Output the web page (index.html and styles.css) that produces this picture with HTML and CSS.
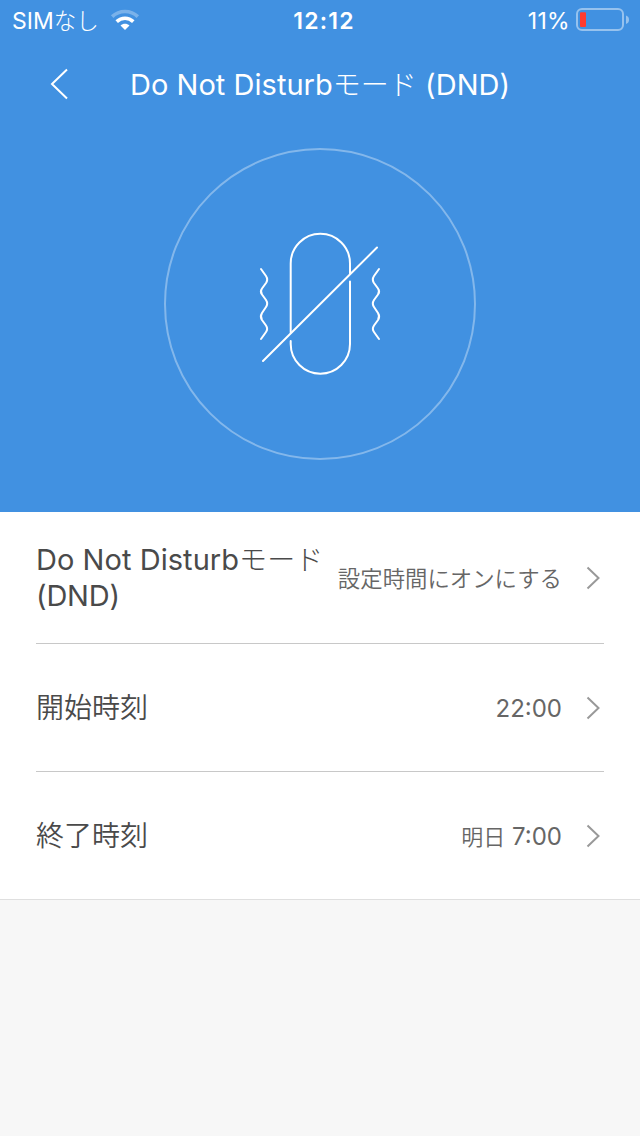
FILE: index.html
```html
<!DOCTYPE html>
<html lang="ja">
<head>
<meta charset="utf-8">
<title>Do Not Disturbモード (DND)</title>
<link rel="stylesheet" href="styles.css">
</head>
<body>
<section class="hero">
  <div class="status">
    <div class="carrier"><span>SIM<span class="kana">なし</span></span>
      <svg class="wifi" width="30" height="22" viewBox="0 0 30 22" fill="none" stroke="#fff">
        <path d="M2.200 7.600 C9.300 .800 20.700 .800 27.800 7.600" stroke-width="3.600" opacity=".3"/>
        <path d="M6.700 12.600 C11.400 8.200 18.600 8.200 23.300 12.600" stroke-width="3.600"/>
        <path d="M10.500 16.400 C13 14.200 17 14.200 19.500 16.400 L15 21 Z" fill="#fff" stroke="none"/>
      </svg>
    </div>
    <div class="clock">12:12</div>
    <div class="power"><span>11%</span>
      <svg class="battery" width="54" height="24" viewBox="0 0 54 24">
        <rect x="1" y="1" width="46" height="21" rx="5" fill="none" stroke="#fff" stroke-width="2" opacity=".45"/>
        <rect x="4" y="4.300" width="6" height="14.700" rx="1" fill="#ff3b30"/>
        <path d="M50 7.500 Q53 8.500 53 11.700 T50 16 Z" fill="#fff" opacity=".45"/>
      </svg>
    </div>
  </div>
  <div class="navbar">
    <svg class="back" width="20" height="32" viewBox="0 0 20 32" fill="none" stroke="#fff" stroke-width="2"><path d="M17 1.500 L2 16 L17 30.500"/></svg>
    <h1 class="title">Do Not Disturb<span class="kana">モード</span> (DND)</h1>
  </div>
  <div class="dial">
    <svg width="130" height="150" viewBox="255 229 130 150" fill="none" stroke="#fff" stroke-width="2" stroke-linecap="round">
      <path d="M290.700 332.500 V263.500 A29.650 29.650 0 0 1 350 263.500 V273.500"/>
      <path d="M350 281.500 V344 A29.650 29.650 0 0 1 290.700 344 V341"/>
      <path d="M263 361 L377 247.500"/>
      <path d="M261 269 L266 276 Q268.300 279.500 266 283 L262 288.500 Q259.800 291.500 262 294.500 L266 300 Q268.300 303.500 266 307 L262 313 Q259.800 316.500 262 320 L266 325.500 Q268.300 329 266 332 L261 339"/>
      <path d="M379 269 L374 276 Q371.700 279.500 374 283 L378 288.500 Q380.200 291.500 378 294.500 L374 300 Q371.700 303.500 374 307 L378 313 Q380.200 316.500 378 320 L374 325.500 Q371.700 329 374 332 L379 339"/>
    </svg>
  </div>
</section>
<main class="list">
  <div class="row first">
    <div class="label"><span class="latin">Do Not Disturb<span class="kana">モード</span></span><br><span class="latin dnd">(DND)</span></div>
    <div class="value jp">設定時間にオンにする</div>
    <svg class="chev" width="14" height="24" viewBox="0 0 14 24"><path d="M1.500 1.500 L12.500 12 L1.500 22.500"/></svg>
  </div>
  <div class="row">
    <div class="label start">開始時刻</div>
    <div class="value">22:00</div>
    <svg class="chev" width="14" height="24" viewBox="0 0 14 24"><path d="M1.500 1.500 L12.500 12 L1.500 22.500"/></svg>
  </div>
  <div class="row last">
    <div class="label">終了時刻</div>
    <div class="value"><span class="day">明日</span> 7:00</div>
    <svg class="chev" width="14" height="24" viewBox="0 0 14 24"><path d="M1.500 1.500 L12.500 12 L1.500 22.500"/></svg>
  </div>
</main>
</body>
</html>
```
FILE: styles.css
```css
* { box-sizing: border-box; }
body {
  margin: 0;
  min-height: 1136px;
  background: #f7f7f7;
  font-family: Inter, "Noto Sans CJK JP", sans-serif;
}
svg { display: block; flex: none; }
.hero {
  height: 512px;
  background: #4191e1;
  color: #fff;
  display: flex;
  flex-direction: column;
}
.status {
  height: 41px;
  padding: 0 10px 0 12px;
  display: grid;
  grid-template-columns: 1fr auto 1fr;
  align-items: center;
  font-size: 23px;
  font-weight: 400;
  line-height: 40px;
  white-space: nowrap;
}
.carrier > span, .clock, .power > span { padding-top: 1px; }
.carrier, .power { display: flex; align-items: center; }
.carrier .kana { font-size: 22.500px; font-weight: 300; }
.wifi { margin: 0 0 2px 11px; }
.clock { padding-left: 6px; font-weight: 600; letter-spacing: 1.200px; }
.power { justify-content: flex-end; }
.power > span { letter-spacing: .3px; }
.battery { margin: 0 0 1px 6px; }
.navbar {
  height: 87px;
  padding: 0 0 2px 50px;
  display: flex;
  align-items: center;
}
.title {
  margin: 2px 0 0 60px;
  font-size: 29px;
  line-height: 40px;
  font-weight: 400;
  letter-spacing: .03px;
  white-space: nowrap;
}
.title .kana, .label .kana { font-size: 28px; font-weight: 300; }
.dial {
  width: 312px;
  height: 312px;
  margin: 20px auto 0;
  border: 2px solid rgba(255, 255, 255, .35);
  border-radius: 50%;
  display: flex;
  align-items: center;
  justify-content: center;
}
.list {
  height: 388px;
  padding: 0 36px;
  background: #fff;
  border-bottom: 1px solid #dfdfdf;
}
.row {
  height: 128px;
  display: flex;
  align-items: center;
  border-bottom: 1px solid #c8c8c8;
}
.row.first { height: 132px; }
.row.last { border-bottom: 0; }
.label {
  font-size: 28px;
  line-height: 35px;
  font-weight: 350;
  color: #4a4a4a;
  white-space: nowrap;
}
.label.start { padding-top: 2px; }
.latin { font-size: 29px; font-weight: 400; letter-spacing: .05px; }
.dnd { letter-spacing: -.2px; }
.value {
  margin-left: auto;
  padding-top: 2px;
  color: #666;
  font-size: 24px;
  font-weight: 400;
  line-height: 32px;
  white-space: nowrap;
}
.value.jp { font-size: 22.400px; font-weight: 350; }
.day { font-size: 22px; font-weight: 350; }
.chev {
  margin: 0 4px 0 24px;
  fill: none;
  stroke: #999;
  stroke-width: 2;
}
```
